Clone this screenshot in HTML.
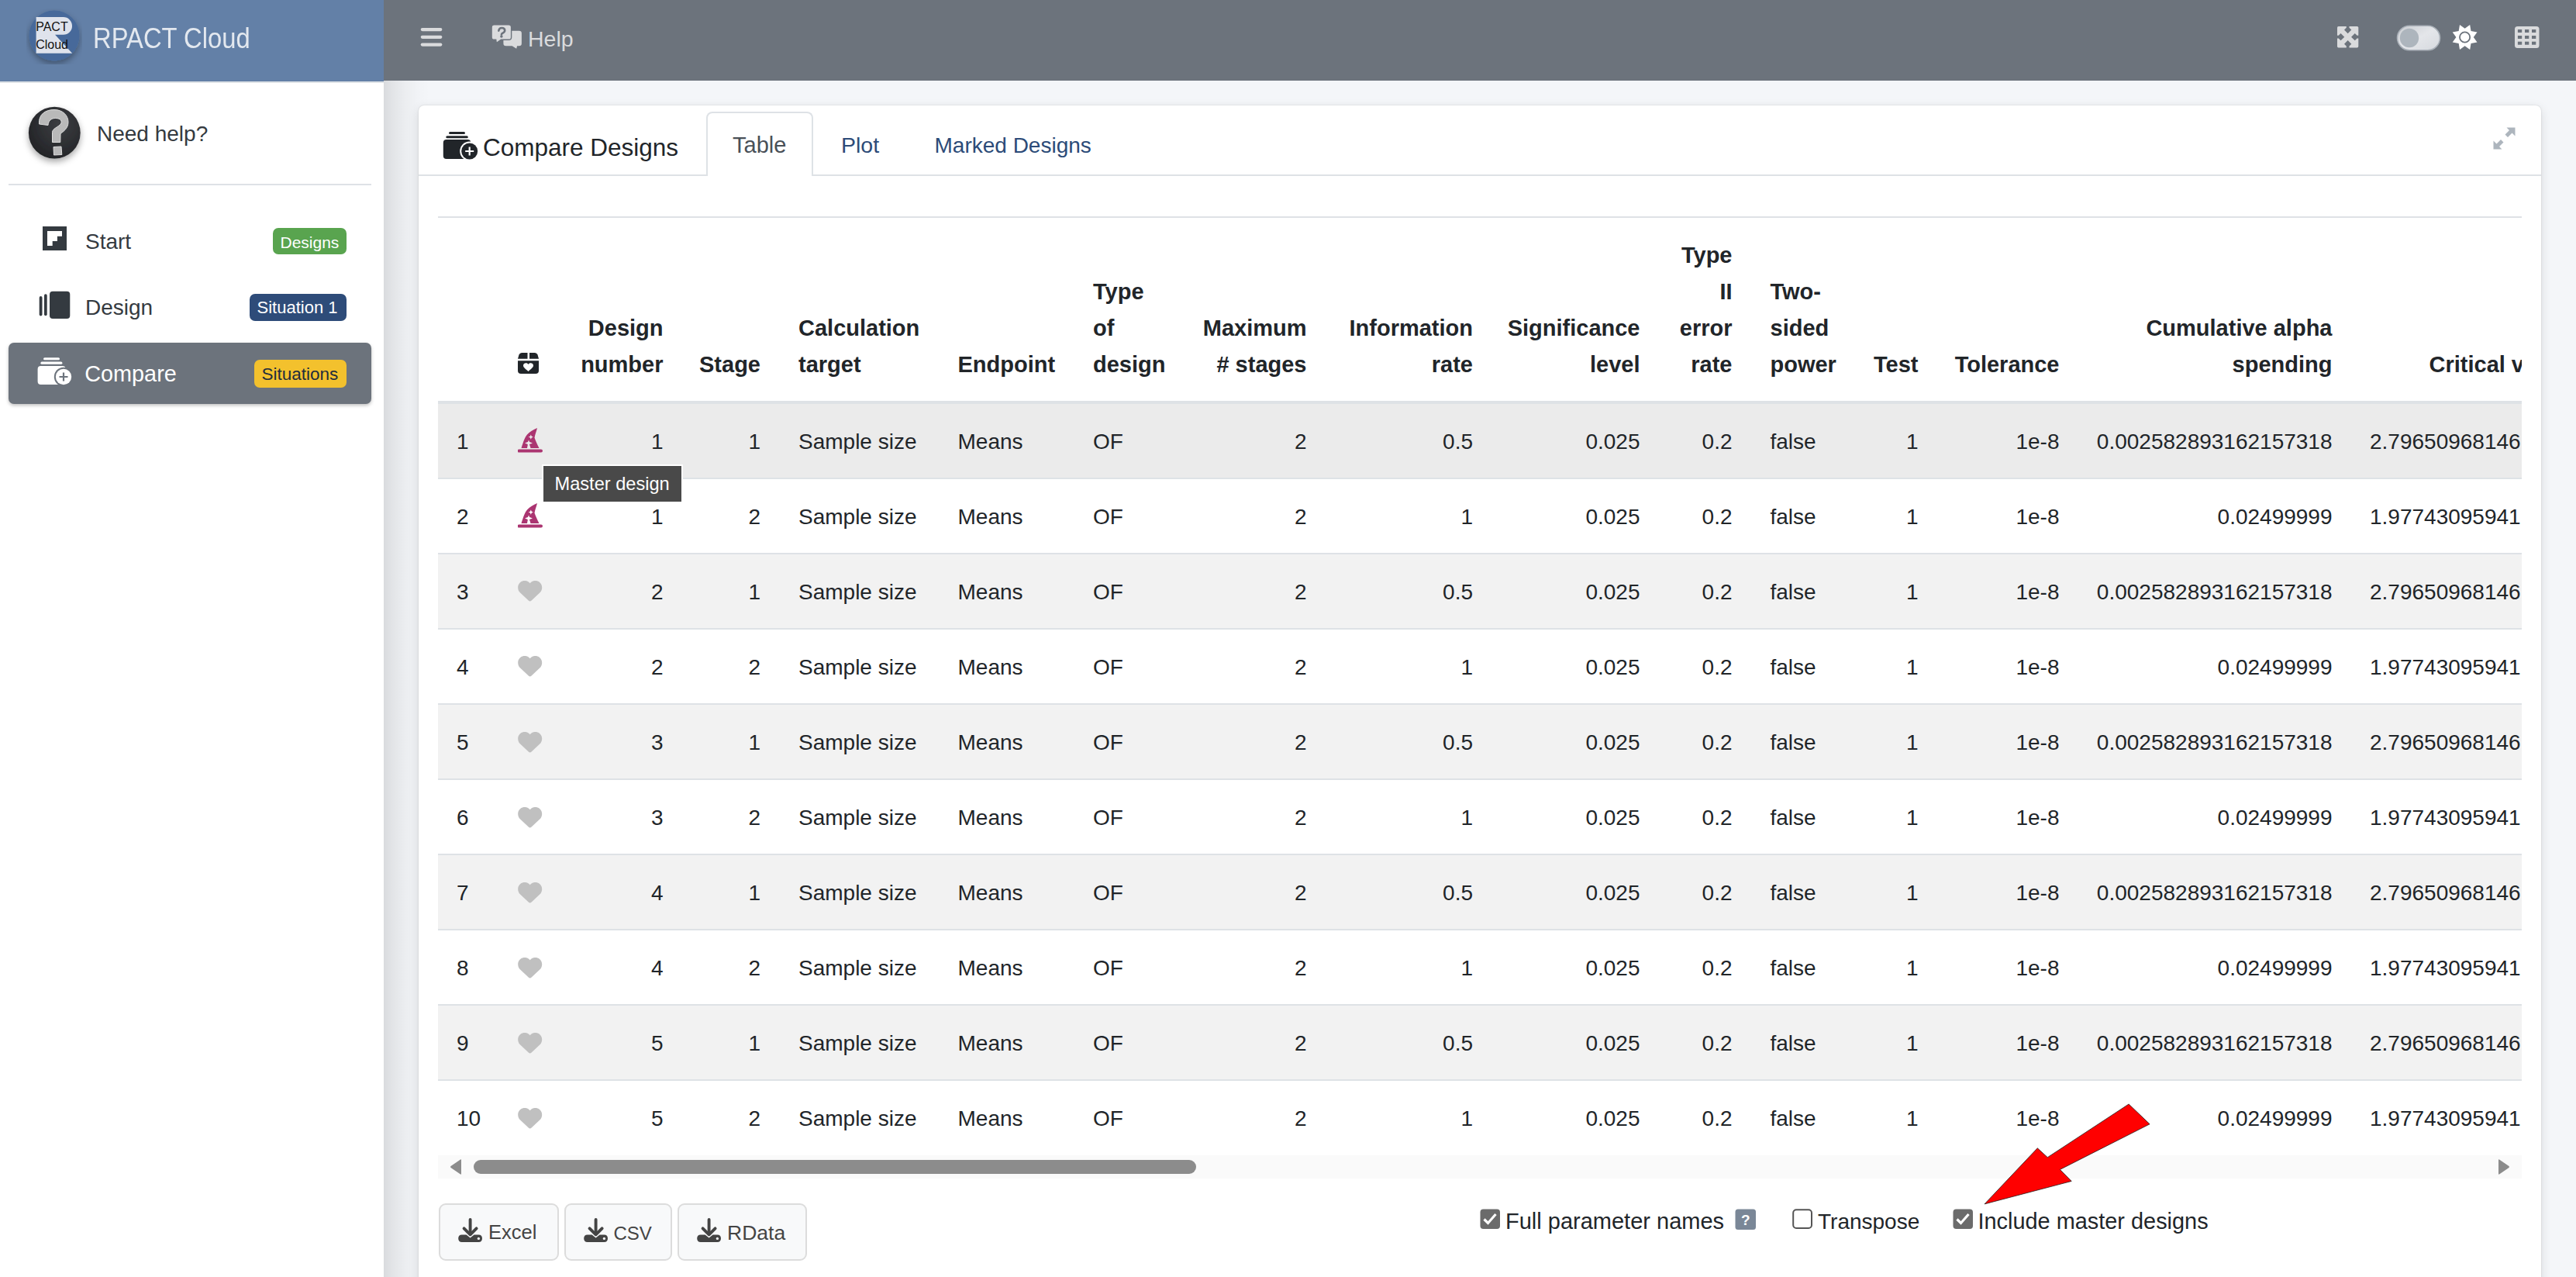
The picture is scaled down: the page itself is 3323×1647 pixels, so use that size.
<!DOCTYPE html>
<html><head><meta charset="utf-8"><title>RPACT Cloud</title>
<style>
html,body{margin:0;padding:0;}
body{width:3323px;height:1647px;overflow:hidden;position:relative;background:#f4f6f9;font-family:"Liberation Sans", sans-serif;}
.t{position:absolute;white-space:nowrap;}
.r{position:absolute;}
svg.r{display:block;}
</style></head><body>
<div class="r" style="left:495px;top:104px;width:2828px;height:1543px;background:#f4f6f9;"></div><div class="r" style="left:495px;top:0px;width:2828px;height:104px;background:#6c737c;"></div><div class="r" style="left:0px;top:0px;width:495px;height:1647px;background:#ffffff;z-index:2"></div><div class="r" style="left:0px;top:0px;width:495px;height:105px;background:#6380a7;z-index:3"></div><div class="r" style="left:0px;top:105px;width:495px;height:2px;background:#dee2e6;z-index:3"></div><div style="position:absolute;left:0;top:0;width:495px;height:1647px;z-index:4"><svg class="r" style="left:34px;top:11px;" width="72" height="72" viewBox="0 0 72 72">
<defs><filter id="ls" x="-30%" y="-30%" width="160%" height="160%"><feDropShadow dx="0" dy="4" stdDeviation="4" flood-color="#000" flood-opacity=".35"/></filter></defs>
<circle cx="36" cy="35" r="32.5" fill="#46699a" filter="url(#ls)"/>
<path d="M12.6 11.1 H47.7 A11.35 11.35 0 0 1 47.7 33.8 H37 L59.2 57.7 H12.6 Z" fill="#dfe3ec"/>
<text x="12.2" y="28.6" font-family="Liberation Sans" font-size="16" fill="#111">PACT</text>
<text x="12.2" y="51.9" font-family="Liberation Sans" font-size="16" fill="#111">Cloud</text>
</svg><div class="t" style="left:119.5px;top:30.6px;font-size:37px;line-height:37px;color:rgba(255,255,255,.82);font-weight:normal;transform:scaleX(0.885);transform-origin:left center;">RPACT Cloud</div><svg class="r" style="left:28px;top:130px;" width="86" height="86" viewBox="0 0 86 86">
<defs><filter id="hs" x="-30%" y="-30%" width="160%" height="160%"><feDropShadow dx="0" dy="4" stdDeviation="4" flood-color="#000" flood-opacity=".35"/></filter>
<radialGradient id="hg" cx="60%" cy="35%" r="70%"><stop offset="0" stop-color="#3c3e42"/><stop offset="1" stop-color="#222326"/></radialGradient></defs>
<circle cx="42.3" cy="41.2" r="33.4" fill="url(#hg)" filter="url(#hs)"/>
<path d="M22.5 30 C21.5 17 31 11.5 42 11.5 C53 11.5 60 19 60 27.5 C60 36 53 40 50 42.5 L49.8 53.5 L39.5 53.5 L39.5 40.5 C39.5 36 47.5 33.5 50.3 30 C52.5 26.5 50.5 22.5 43.5 22.5 C37.5 22.5 34.5 26 34 31.5 Z" fill="#b9b9b9" stroke="#dedede" stroke-width="1"/>
<path d="M41 59.5 L51 59 L51.8 69.5 L41.5 70 Z" fill="#b9b9b9" stroke="#dedede" stroke-width="1"/>
</svg><div class="t" style="left:125px;top:158.8px;font-size:28px;line-height:28px;color:#343a40;font-weight:normal;">Need help?</div><div class="r" style="left:11px;top:237px;width:468px;height:2px;background:#dee2e6;"></div><svg class="r" style="left:55px;top:292px;" width="31" height="31" viewBox="0 0 31 31"><rect width="31" height="31" fill="#343a40"/><path d="M6 6 H25 V12.7 H18.9 V18.9 H12.7 V25.1 H6 Z" fill="#fff"/></svg><div class="t" style="left:110px;top:297.5px;font-size:28px;line-height:28px;color:#343a40;font-weight:normal;">Start</div><div class="r" style="left:352px;top:294px;width:95px;height:34px;background:#59a44f;border-radius:7px"></div><div class="t" style="left:361.5px;top:302.1px;font-size:21px;line-height:21px;color:#ffffff;font-weight:normal;">Designs</div><svg class="r" style="left:50px;top:375px;" width="41" height="37" viewBox="0 0 41 37"><rect x="0.7" y="7" width="3.8" height="25.5" rx="1.9" fill="#343a40"/><rect x="7" y="4.3" width="3.7" height="28" rx="1.8" fill="#343a40"/><rect x="14" y="0.7" width="26.3" height="35.3" rx="4" fill="#343a40"/></svg><div class="t" style="left:110px;top:383.2px;font-size:28px;line-height:28px;color:#343a40;font-weight:normal;">Design</div><div class="r" style="left:322px;top:379px;width:125px;height:35px;background:#2e4c79;border-radius:7px"></div><div class="t" style="left:331.5px;top:386.4px;font-size:22px;line-height:22px;color:#ffffff;font-weight:normal;">Situation 1</div><div class="r" style="left:11px;top:442px;width:468px;height:79px;background:#6c737c;border-radius:7px;box-shadow:0 2px 4px rgba(0,0,0,.25)"></div><svg class="r" style="left:48px;top:460px;" width="46" height="38" viewBox="0 0 46 38"><rect x="8" y="1.3" width="21" height="3" rx="1.5" fill="#fff"/>
<rect x="4.4" y="6.6" width="28" height="3.2" rx="1.6" fill="#fff"/>
<rect x="0.6" y="12" width="36" height="24" rx="4" fill="#fff"/>
<circle cx="34" cy="26" r="12.2" fill="#6c737c"/>
<circle cx="34" cy="26" r="10.2" fill="#fff"/>
<path d="M34 20.5 V31.5 M28.5 26 H39.5" stroke="#6c737c" stroke-width="2.2"/></svg><div class="t" style="left:109.3px;top:468.1px;font-size:28.8px;line-height:28.8px;color:#ffffff;font-weight:normal;">Compare</div><div class="r" style="left:328px;top:464px;width:119px;height:36px;background:#f3c12d;border-radius:7px"></div><div class="t" style="left:337.5px;top:471.6px;font-size:22.5px;line-height:22.5px;color:#1f2d3d;font-weight:normal;">Situations</div></div><div class="r" style="left:495px;top:104px;width:60px;height:1543px;background:linear-gradient(to right, rgba(0,0,0,.11), rgba(0,0,0,.07) 12px, rgba(0,0,0,.035) 28px, rgba(0,0,0,.012) 45px, rgba(0,0,0,0));z-index:1"></div><svg class="r" style="left:542px;top:35px;" width="29" height="26" viewBox="0 0 29 26"><rect x="0.7" y="1" width="27.7" height="4.2" rx="2.1" fill="#dadbdd"/><rect x="0.7" y="10.7" width="27.7" height="4.2" rx="2.1" fill="#dadbdd"/><rect x="0.7" y="20.5" width="27.7" height="4.2" rx="2.1" fill="#dadbdd"/></svg><svg class="r" style="left:633px;top:31px;" width="42" height="34" viewBox="0 0 42 34">
<path d="M19.7 8.8 H36.6 Q39.9 8.8 39.9 12.1 V24.9 Q39.9 28.2 36.6 28.2 H34.1 L33.2 31.8 L27.6 28.2 H19.7 Q16.4 28.2 16.4 24.9 V12.1 Q16.4 8.8 19.7 8.8 Z" fill="#dadbdd"/>
<path d="M4.4 0.9 H23.3 Q26.6 0.9 26.6 4.2 V17 Q26.6 20.3 23.3 20.3 H13.4 L7.3 24.6 L6.7 20.3 H4.4 Q1.1 20.3 1.1 17 V4.2 Q1.1 0.9 4.4 0.9 Z" fill="#dadbdd" stroke="#6c737c" stroke-width="1.4"/>
<path d="M10.3 8.6 Q10.8 5 14.3 5 Q18.2 5 18.2 8.3 Q18.2 10.3 15.6 11.6 Q13.9 12.5 13.9 13.4" fill="none" stroke="#6c737c" stroke-width="2.6" stroke-linecap="round"/>
<circle cx="13.9" cy="16.1" r="1.75" fill="#6c737c"/>
</svg><div class="t" style="left:681px;top:35.7px;font-size:28.5px;line-height:28.5px;color:#dadbdd;font-weight:normal;">Help</div><svg class="r" style="left:3015px;top:34px;" width="28" height="28" viewBox="0 0 28 28"><rect x="0" y="0" width="27.3" height="27.4" rx="1.6" fill="#dadbdd"/><g transform="rotate(0 13.65 13.7)"><polygon points="11.8,-1 11.8,1.8 9,4.6 13.65,9.3 18.3,4.6 15.5,1.8 15.5,-1" fill="#6c737c"/></g><g transform="rotate(90 13.65 13.7)"><polygon points="11.8,-1 11.8,1.8 9,4.6 13.65,9.3 18.3,4.6 15.5,1.8 15.5,-1" fill="#6c737c"/></g><g transform="rotate(180 13.65 13.7)"><polygon points="11.8,-1 11.8,1.8 9,4.6 13.65,9.3 18.3,4.6 15.5,1.8 15.5,-1" fill="#6c737c"/></g><g transform="rotate(270 13.65 13.7)"><polygon points="11.8,-1 11.8,1.8 9,4.6 13.65,9.3 18.3,4.6 15.5,1.8 15.5,-1" fill="#6c737c"/></g></svg><svg class="r" style="left:3091px;top:32px;" width="58" height="34" viewBox="0 0 58 34"><defs><linearGradient id="tg" x1="0" y1="0" x2="1" y2="1"><stop offset="0" stop-color="#c9ccd1"/><stop offset=".5" stop-color="#e4e6ea"/><stop offset="1" stop-color="#d6d9de"/></linearGradient></defs>
<rect x="1.5" y="1.2" width="55" height="31.5" rx="15.8" fill="url(#tg)" stroke="#a9b0b8" stroke-width="1.6"/>
<circle cx="17" cy="17" r="12.2" fill="#adb5bd"/></svg><svg class="r" style="left:3162px;top:31px;" width="36" height="36" viewBox="0 0 36 36"><polygon points="24.18,1.11 25.52,9.08 33.49,10.42 28.80,17.00 33.49,23.58 25.52,24.92 24.18,32.89 17.60,28.20 11.02,32.89 9.68,24.92 1.71,23.58 6.40,17.00 1.71,10.42 9.68,9.08 11.02,1.11 17.60,5.80" fill="#ffffff"/><circle cx="17.6" cy="17" r="6.6" fill="#fff" stroke="#6c737c" stroke-width="1.8"/></svg><svg class="r" style="left:3243px;top:33px;" width="34" height="30" viewBox="0 0 34 30"><rect x="1" y="1" width="31.5" height="28" rx="3.5" fill="#dadbdd"/>
<g fill="#6c737c">
<rect x="4.9" y="5" width="5.3" height="4"/><rect x="14" y="5" width="5.3" height="4"/><rect x="23" y="5" width="5.3" height="4"/>
<rect x="4.9" y="13" width="5.3" height="4"/><rect x="14" y="13" width="5.3" height="4"/><rect x="23" y="13" width="5.3" height="4"/>
<rect x="4.9" y="20.7" width="5.3" height="4"/><rect x="14" y="20.7" width="5.3" height="4"/><rect x="23" y="20.7" width="5.3" height="4"/>
</g></svg><div class="r" style="left:540px;top:136px;width:2738px;height:1531px;background:#ffffff;border-radius:7px;box-shadow:0 0 2px rgba(0,0,0,.16),0 4px 14px rgba(0,0,0,.12);z-index:1"></div><div style="position:absolute;left:0;top:0;width:3323px;height:1647px;z-index:5"><div class="r" style="left:540px;top:225px;width:372px;height:2px;background:#dee2e6;"></div><div class="r" style="left:1049px;top:225px;width:2229px;height:2px;background:#dee2e6;"></div><div class="r" style="left:911px;top:144px;width:138px;height:83px;border:2px solid #dee2e6;border-bottom:none;border-radius:8px 8px 0 0;box-sizing:border-box;background:#fff"></div><svg class="r" style="left:571px;top:169px;overflow:visible" width="38" height="38" viewBox="0 0 38 38"><rect x="8" y="1" width="21" height="3" rx="1.5" fill="#212529"/>
<rect x="4.3" y="6.3" width="28.5" height="3" rx="1.5" fill="#212529"/>
<rect x="0.8" y="11" width="35.5" height="25" rx="4" fill="#212529"/>
<circle cx="34.7" cy="26" r="12.5" fill="#fff"/>
<circle cx="34.7" cy="26" r="10.5" fill="#212529"/>
<path d="M34.7 20.5 V31.5 M29.2 26 H40.2" stroke="#fff" stroke-width="2.2"/></svg><div class="t" style="left:623px;top:174.9px;font-size:31.5px;line-height:31.5px;color:#212529;font-weight:normal;">Compare Designs</div><div class="t" style="left:945px;top:172.6px;font-size:29px;line-height:29px;color:#495057;font-weight:normal;">Table</div><div class="t" style="left:1085px;top:173.0px;font-size:28.5px;line-height:28.5px;color:#2c4b78;font-weight:normal;">Plot</div><div class="t" style="left:1205.5px;top:173.5px;font-size:28px;line-height:28px;color:#2c4b78;font-weight:normal;">Marked Designs</div><svg class="r" style="left:3216px;top:164px;" width="29" height="29" viewBox="0 0 29 29"><path d="M17.5 0.5 H28.5 V11.5 L24.5 7.5 L19 13 L15.5 9.5 L21 4 Z" fill="#adb5bd"/>
<path d="M11.5 28.5 H0.5 V17.5 L4.5 21.5 L10 16 L13.5 19.5 L8 25 Z" fill="#adb5bd"/></svg><div class="r" style="left:565px;top:279px;width:2688px;height:2px;background:#dee2e6;"></div></div><div style="position:absolute;left:0;top:0;width:3253px;height:1647px;overflow:hidden;z-index:5"><div class="r" style="left:565px;top:517px;width:2688px;height:4px;background:#dee2e6;"></div><div class="r" style="left:565px;top:521px;width:2688px;height:95px;background:#ebebeb;"></div><div class="r" style="left:565px;top:616px;width:2688px;height:2px;background:#dee2e6;"></div><div class="r" style="left:565px;top:618px;width:2688px;height:95px;background:#ffffff;"></div><div class="r" style="left:565px;top:713px;width:2688px;height:2px;background:#dee2e6;"></div><div class="r" style="left:565px;top:715px;width:2688px;height:95px;background:#f2f2f2;"></div><div class="r" style="left:565px;top:810px;width:2688px;height:2px;background:#dee2e6;"></div><div class="r" style="left:565px;top:812px;width:2688px;height:95px;background:#ffffff;"></div><div class="r" style="left:565px;top:907px;width:2688px;height:2px;background:#dee2e6;"></div><div class="r" style="left:565px;top:909px;width:2688px;height:95px;background:#f2f2f2;"></div><div class="r" style="left:565px;top:1004px;width:2688px;height:2px;background:#dee2e6;"></div><div class="r" style="left:565px;top:1006px;width:2688px;height:95px;background:#ffffff;"></div><div class="r" style="left:565px;top:1101px;width:2688px;height:2px;background:#dee2e6;"></div><div class="r" style="left:565px;top:1103px;width:2688px;height:95px;background:#f2f2f2;"></div><div class="r" style="left:565px;top:1198px;width:2688px;height:2px;background:#dee2e6;"></div><div class="r" style="left:565px;top:1200px;width:2688px;height:95px;background:#ffffff;"></div><div class="r" style="left:565px;top:1295px;width:2688px;height:2px;background:#dee2e6;"></div><div class="r" style="left:565px;top:1297px;width:2688px;height:95px;background:#f2f2f2;"></div><div class="r" style="left:565px;top:1392px;width:2688px;height:2px;background:#dee2e6;"></div><div class="r" style="left:565px;top:1394px;width:2688px;height:95px;background:#ffffff;"></div><svg class="r" style="left:667px;top:454px;" width="30" height="30" viewBox="0 0 30 30"><path d="M6 1 Q3.5 1 2.5 3.5 L1 8.8 H13.5 V1 Z" fill="#212529"/>
<path d="M16 1 H23 Q25.5 1 26.5 3.5 L28 8.8 H16 Z" fill="#212529"/>
<path d="M1 11.2 H28 V24 Q28 28 24 28 H5 Q1 28 1 24 Z" fill="#212529"/>
<path d="M14.5 16 C13.5 13.5 8 13.5 8 17.5 C8 19.5 10 21 14.5 25 C19 21 21 19.5 21 17.5 C21 13.5 15.5 13.5 14.5 16 Z" fill="#fff"/></svg><div class="t" style="right:2397.5px;top:408.9px;font-size:29px;line-height:29px;color:#212529;font-weight:bold;">Design</div><div class="t" style="right:2397.5px;top:455.9px;font-size:29px;line-height:29px;color:#212529;font-weight:bold;">number</div><div class="t" style="right:2272px;top:455.9px;font-size:29px;line-height:29px;color:#212529;font-weight:bold;">Stage</div><div class="t" style="left:1030px;top:408.9px;font-size:29px;line-height:29px;color:#212529;font-weight:bold;">Calculation</div><div class="t" style="left:1030px;top:455.9px;font-size:29px;line-height:29px;color:#212529;font-weight:bold;">target</div><div class="t" style="left:1235.5px;top:455.9px;font-size:29px;line-height:29px;color:#212529;font-weight:bold;">Endpoint</div><div class="t" style="left:1410px;top:362.1px;font-size:29px;line-height:29px;color:#212529;font-weight:bold;">Type</div><div class="t" style="left:1410px;top:408.9px;font-size:29px;line-height:29px;color:#212529;font-weight:bold;">of</div><div class="t" style="left:1410px;top:455.9px;font-size:29px;line-height:29px;color:#212529;font-weight:bold;">design</div><div class="t" style="right:1567.5px;top:408.9px;font-size:29px;line-height:29px;color:#212529;font-weight:bold;">Maximum</div><div class="t" style="right:1567.5px;top:455.9px;font-size:29px;line-height:29px;color:#212529;font-weight:bold;"># stages</div><div class="t" style="right:1353px;top:408.9px;font-size:29px;line-height:29px;color:#212529;font-weight:bold;">Information</div><div class="t" style="right:1353px;top:455.9px;font-size:29px;line-height:29px;color:#212529;font-weight:bold;">rate</div><div class="t" style="right:1137.5px;top:408.9px;font-size:29px;line-height:29px;color:#212529;font-weight:bold;">Significance</div><div class="t" style="right:1137.5px;top:455.9px;font-size:29px;line-height:29px;color:#212529;font-weight:bold;">level</div><div class="t" style="right:1018.5px;top:315.3px;font-size:29px;line-height:29px;color:#212529;font-weight:bold;">Type</div><div class="t" style="right:1018.5px;top:362.1px;font-size:29px;line-height:29px;color:#212529;font-weight:bold;">II</div><div class="t" style="right:1018.5px;top:408.9px;font-size:29px;line-height:29px;color:#212529;font-weight:bold;">error</div><div class="t" style="right:1018.5px;top:455.9px;font-size:29px;line-height:29px;color:#212529;font-weight:bold;">rate</div><div class="t" style="left:2283.5px;top:362.1px;font-size:29px;line-height:29px;color:#212529;font-weight:bold;">Two-</div><div class="t" style="left:2283.5px;top:408.9px;font-size:29px;line-height:29px;color:#212529;font-weight:bold;">sided</div><div class="t" style="left:2283.5px;top:455.9px;font-size:29px;line-height:29px;color:#212529;font-weight:bold;">power</div><div class="t" style="right:778.5px;top:455.9px;font-size:29px;line-height:29px;color:#212529;font-weight:bold;">Test</div><div class="t" style="right:596.5px;top:455.9px;font-size:29px;line-height:29px;color:#212529;font-weight:bold;">Tolerance</div><div class="t" style="right:244.5px;top:408.9px;font-size:29px;line-height:29px;color:#212529;font-weight:bold;">Cumulative alpha</div><div class="t" style="right:244.5px;top:455.9px;font-size:29px;line-height:29px;color:#212529;font-weight:bold;">spending</div><div class="t" style="left:3133.5px;top:455.9px;font-size:29px;line-height:29px;color:#212529;font-weight:bold;">Critical values</div><div class="t" style="left:589px;top:555.8px;font-size:28px;line-height:28px;color:#212529;font-weight:normal;">1</div><svg class="r" style="left:667.5px;top:551.7px;" width="32" height="32" viewBox="0 0 32 32"><path d="M1.5 27.5 H30 A2 2 0 0 1 30 31.5 H1.5 A2 2 0 0 1 1.5 27.5 Z" fill="#ab3571"/>
<path d="M4.5 26 C7 18 9 12 12 8.5 C15 5 20 2 25 0 C24 4 22 9 21.5 12.5 C23 17 25 21 27.5 26 H16.5 L15.5 22.5 Q14 21 16.5 20.5 L19 19.5 L16.5 18.5 Q14.5 18 14 15.5 Q13.5 18 11.5 18.5 L9 19.5 L11.5 20.5 Q13.5 21 12.5 23 L12 26 Z" fill="#ab3571"/>
<path d="M16.8 8.5 L17.8 10.8 L20 11.6 L17.8 12.5 L16.8 14.8 L15.9 12.5 L13.6 11.6 L15.9 10.8 Z" fill="#ebebeb"/></svg><div class="t" style="right:2397.5px;top:555.8px;font-size:28px;line-height:28px;color:#212529;font-weight:normal;">1</div><div class="t" style="right:2272px;top:555.8px;font-size:28px;line-height:28px;color:#212529;font-weight:normal;">1</div><div class="t" style="left:1030px;top:555.8px;font-size:28px;line-height:28px;color:#212529;font-weight:normal;">Sample size</div><div class="t" style="left:1235.5px;top:555.8px;font-size:28px;line-height:28px;color:#212529;font-weight:normal;">Means</div><div class="t" style="left:1410px;top:555.8px;font-size:28px;line-height:28px;color:#212529;font-weight:normal;">OF</div><div class="t" style="right:1567.5px;top:555.8px;font-size:28px;line-height:28px;color:#212529;font-weight:normal;">2</div><div class="t" style="right:1353px;top:555.8px;font-size:28px;line-height:28px;color:#212529;font-weight:normal;">0.5</div><div class="t" style="right:1137.5px;top:555.8px;font-size:28px;line-height:28px;color:#212529;font-weight:normal;">0.025</div><div class="t" style="right:1018.5px;top:555.8px;font-size:28px;line-height:28px;color:#212529;font-weight:normal;">0.2</div><div class="t" style="left:2283.5px;top:555.8px;font-size:28px;line-height:28px;color:#212529;font-weight:normal;">false</div><div class="t" style="right:778.5px;top:555.8px;font-size:28px;line-height:28px;color:#212529;font-weight:normal;">1</div><div class="t" style="right:596.5px;top:555.8px;font-size:28px;line-height:28px;color:#212529;font-weight:normal;">1e-8</div><div class="t" style="right:244.5px;top:555.8px;font-size:28px;line-height:28px;color:#212529;font-weight:normal;">0.002582893162157318</div><div class="t" style="left:3057px;top:555.8px;font-size:28px;line-height:28px;color:#212529;font-weight:normal;">2.79650968146</div><div class="t" style="left:589px;top:652.8px;font-size:28px;line-height:28px;color:#212529;font-weight:normal;">2</div><svg class="r" style="left:667.5px;top:648.75px;" width="32" height="32" viewBox="0 0 32 32"><path d="M1.5 27.5 H30 A2 2 0 0 1 30 31.5 H1.5 A2 2 0 0 1 1.5 27.5 Z" fill="#ab3571"/>
<path d="M4.5 26 C7 18 9 12 12 8.5 C15 5 20 2 25 0 C24 4 22 9 21.5 12.5 C23 17 25 21 27.5 26 H16.5 L15.5 22.5 Q14 21 16.5 20.5 L19 19.5 L16.5 18.5 Q14.5 18 14 15.5 Q13.5 18 11.5 18.5 L9 19.5 L11.5 20.5 Q13.5 21 12.5 23 L12 26 Z" fill="#ab3571"/>
<path d="M16.8 8.5 L17.8 10.8 L20 11.6 L17.8 12.5 L16.8 14.8 L15.9 12.5 L13.6 11.6 L15.9 10.8 Z" fill="#ffffff"/></svg><div class="t" style="right:2397.5px;top:652.8px;font-size:28px;line-height:28px;color:#212529;font-weight:normal;">1</div><div class="t" style="right:2272px;top:652.8px;font-size:28px;line-height:28px;color:#212529;font-weight:normal;">2</div><div class="t" style="left:1030px;top:652.8px;font-size:28px;line-height:28px;color:#212529;font-weight:normal;">Sample size</div><div class="t" style="left:1235.5px;top:652.8px;font-size:28px;line-height:28px;color:#212529;font-weight:normal;">Means</div><div class="t" style="left:1410px;top:652.8px;font-size:28px;line-height:28px;color:#212529;font-weight:normal;">OF</div><div class="t" style="right:1567.5px;top:652.8px;font-size:28px;line-height:28px;color:#212529;font-weight:normal;">2</div><div class="t" style="right:1353px;top:652.8px;font-size:28px;line-height:28px;color:#212529;font-weight:normal;">1</div><div class="t" style="right:1137.5px;top:652.8px;font-size:28px;line-height:28px;color:#212529;font-weight:normal;">0.025</div><div class="t" style="right:1018.5px;top:652.8px;font-size:28px;line-height:28px;color:#212529;font-weight:normal;">0.2</div><div class="t" style="left:2283.5px;top:652.8px;font-size:28px;line-height:28px;color:#212529;font-weight:normal;">false</div><div class="t" style="right:778.5px;top:652.8px;font-size:28px;line-height:28px;color:#212529;font-weight:normal;">1</div><div class="t" style="right:596.5px;top:652.8px;font-size:28px;line-height:28px;color:#212529;font-weight:normal;">1e-8</div><div class="t" style="right:244.5px;top:652.8px;font-size:28px;line-height:28px;color:#212529;font-weight:normal;">0.02499999</div><div class="t" style="left:3057px;top:652.8px;font-size:28px;line-height:28px;color:#212529;font-weight:normal;">1.97743095941</div><div class="t" style="left:589px;top:749.9px;font-size:28px;line-height:28px;color:#212529;font-weight:normal;">3</div><svg class="r" style="left:668px;top:749px;" width="32" height="28" viewBox="0 0 32 28"><g transform="translate(0.2,-2.6) scale(0.0605)"><path d="M47.6 300.4L228.3 469.1c7.5 7 17.4 10.9 27.7 10.9s20.2-3.9 27.7-10.9L464.4 300.4c30.4-28.3 47.6-68 47.6-109.5v-5.8c0-69.900-50.5-129.5-119.4-141C347 36.5 300.6 51.4 268 84L256 96 244 84c-32.6-32.6-79-47.5-124.6-39.9C50.5 55.6 0 115.2 0 185.100v5.8c0 41.5 17.2 81.2 47.6 109.5z" fill="#c0c0c0"/></g></svg><div class="t" style="right:2397.5px;top:749.9px;font-size:28px;line-height:28px;color:#212529;font-weight:normal;">2</div><div class="t" style="right:2272px;top:749.9px;font-size:28px;line-height:28px;color:#212529;font-weight:normal;">1</div><div class="t" style="left:1030px;top:749.9px;font-size:28px;line-height:28px;color:#212529;font-weight:normal;">Sample size</div><div class="t" style="left:1235.5px;top:749.9px;font-size:28px;line-height:28px;color:#212529;font-weight:normal;">Means</div><div class="t" style="left:1410px;top:749.9px;font-size:28px;line-height:28px;color:#212529;font-weight:normal;">OF</div><div class="t" style="right:1567.5px;top:749.9px;font-size:28px;line-height:28px;color:#212529;font-weight:normal;">2</div><div class="t" style="right:1353px;top:749.9px;font-size:28px;line-height:28px;color:#212529;font-weight:normal;">0.5</div><div class="t" style="right:1137.5px;top:749.9px;font-size:28px;line-height:28px;color:#212529;font-weight:normal;">0.025</div><div class="t" style="right:1018.5px;top:749.9px;font-size:28px;line-height:28px;color:#212529;font-weight:normal;">0.2</div><div class="t" style="left:2283.5px;top:749.9px;font-size:28px;line-height:28px;color:#212529;font-weight:normal;">false</div><div class="t" style="right:778.5px;top:749.9px;font-size:28px;line-height:28px;color:#212529;font-weight:normal;">1</div><div class="t" style="right:596.5px;top:749.9px;font-size:28px;line-height:28px;color:#212529;font-weight:normal;">1e-8</div><div class="t" style="right:244.5px;top:749.9px;font-size:28px;line-height:28px;color:#212529;font-weight:normal;">0.002582893162157318</div><div class="t" style="left:3057px;top:749.9px;font-size:28px;line-height:28px;color:#212529;font-weight:normal;">2.79650968146</div><div class="t" style="left:589px;top:846.9px;font-size:28px;line-height:28px;color:#212529;font-weight:normal;">4</div><svg class="r" style="left:668px;top:846px;" width="32" height="28" viewBox="0 0 32 28"><g transform="translate(0.2,-2.6) scale(0.0605)"><path d="M47.6 300.4L228.3 469.1c7.5 7 17.4 10.9 27.7 10.9s20.2-3.9 27.7-10.9L464.4 300.4c30.4-28.3 47.6-68 47.6-109.5v-5.8c0-69.900-50.5-129.5-119.4-141C347 36.5 300.6 51.4 268 84L256 96 244 84c-32.6-32.6-79-47.5-124.6-39.9C50.5 55.6 0 115.2 0 185.100v5.8c0 41.5 17.2 81.2 47.6 109.5z" fill="#c0c0c0"/></g></svg><div class="t" style="right:2397.5px;top:846.9px;font-size:28px;line-height:28px;color:#212529;font-weight:normal;">2</div><div class="t" style="right:2272px;top:846.9px;font-size:28px;line-height:28px;color:#212529;font-weight:normal;">2</div><div class="t" style="left:1030px;top:846.9px;font-size:28px;line-height:28px;color:#212529;font-weight:normal;">Sample size</div><div class="t" style="left:1235.5px;top:846.9px;font-size:28px;line-height:28px;color:#212529;font-weight:normal;">Means</div><div class="t" style="left:1410px;top:846.9px;font-size:28px;line-height:28px;color:#212529;font-weight:normal;">OF</div><div class="t" style="right:1567.5px;top:846.9px;font-size:28px;line-height:28px;color:#212529;font-weight:normal;">2</div><div class="t" style="right:1353px;top:846.9px;font-size:28px;line-height:28px;color:#212529;font-weight:normal;">1</div><div class="t" style="right:1137.5px;top:846.9px;font-size:28px;line-height:28px;color:#212529;font-weight:normal;">0.025</div><div class="t" style="right:1018.5px;top:846.9px;font-size:28px;line-height:28px;color:#212529;font-weight:normal;">0.2</div><div class="t" style="left:2283.5px;top:846.9px;font-size:28px;line-height:28px;color:#212529;font-weight:normal;">false</div><div class="t" style="right:778.5px;top:846.9px;font-size:28px;line-height:28px;color:#212529;font-weight:normal;">1</div><div class="t" style="right:596.5px;top:846.9px;font-size:28px;line-height:28px;color:#212529;font-weight:normal;">1e-8</div><div class="t" style="right:244.5px;top:846.9px;font-size:28px;line-height:28px;color:#212529;font-weight:normal;">0.02499999</div><div class="t" style="left:3057px;top:846.9px;font-size:28px;line-height:28px;color:#212529;font-weight:normal;">1.97743095941</div><div class="t" style="left:589px;top:944.0px;font-size:28px;line-height:28px;color:#212529;font-weight:normal;">5</div><svg class="r" style="left:668px;top:944px;" width="32" height="28" viewBox="0 0 32 28"><g transform="translate(0.2,-2.6) scale(0.0605)"><path d="M47.6 300.4L228.3 469.1c7.5 7 17.4 10.9 27.7 10.9s20.2-3.9 27.7-10.9L464.4 300.4c30.4-28.3 47.6-68 47.6-109.5v-5.8c0-69.900-50.5-129.5-119.4-141C347 36.5 300.6 51.4 268 84L256 96 244 84c-32.6-32.6-79-47.5-124.6-39.9C50.5 55.6 0 115.2 0 185.100v5.8c0 41.5 17.2 81.2 47.6 109.5z" fill="#c0c0c0"/></g></svg><div class="t" style="right:2397.5px;top:944.0px;font-size:28px;line-height:28px;color:#212529;font-weight:normal;">3</div><div class="t" style="right:2272px;top:944.0px;font-size:28px;line-height:28px;color:#212529;font-weight:normal;">1</div><div class="t" style="left:1030px;top:944.0px;font-size:28px;line-height:28px;color:#212529;font-weight:normal;">Sample size</div><div class="t" style="left:1235.5px;top:944.0px;font-size:28px;line-height:28px;color:#212529;font-weight:normal;">Means</div><div class="t" style="left:1410px;top:944.0px;font-size:28px;line-height:28px;color:#212529;font-weight:normal;">OF</div><div class="t" style="right:1567.5px;top:944.0px;font-size:28px;line-height:28px;color:#212529;font-weight:normal;">2</div><div class="t" style="right:1353px;top:944.0px;font-size:28px;line-height:28px;color:#212529;font-weight:normal;">0.5</div><div class="t" style="right:1137.5px;top:944.0px;font-size:28px;line-height:28px;color:#212529;font-weight:normal;">0.025</div><div class="t" style="right:1018.5px;top:944.0px;font-size:28px;line-height:28px;color:#212529;font-weight:normal;">0.2</div><div class="t" style="left:2283.5px;top:944.0px;font-size:28px;line-height:28px;color:#212529;font-weight:normal;">false</div><div class="t" style="right:778.5px;top:944.0px;font-size:28px;line-height:28px;color:#212529;font-weight:normal;">1</div><div class="t" style="right:596.5px;top:944.0px;font-size:28px;line-height:28px;color:#212529;font-weight:normal;">1e-8</div><div class="t" style="right:244.5px;top:944.0px;font-size:28px;line-height:28px;color:#212529;font-weight:normal;">0.002582893162157318</div><div class="t" style="left:3057px;top:944.0px;font-size:28px;line-height:28px;color:#212529;font-weight:normal;">2.79650968146</div><div class="t" style="left:589px;top:1041.0px;font-size:28px;line-height:28px;color:#212529;font-weight:normal;">6</div><svg class="r" style="left:668px;top:1041px;" width="32" height="28" viewBox="0 0 32 28"><g transform="translate(0.2,-2.6) scale(0.0605)"><path d="M47.6 300.4L228.3 469.1c7.5 7 17.4 10.9 27.7 10.9s20.2-3.9 27.7-10.9L464.4 300.4c30.4-28.3 47.6-68 47.6-109.5v-5.8c0-69.900-50.5-129.5-119.4-141C347 36.5 300.6 51.4 268 84L256 96 244 84c-32.6-32.6-79-47.5-124.6-39.9C50.5 55.6 0 115.2 0 185.100v5.8c0 41.5 17.2 81.2 47.6 109.5z" fill="#c0c0c0"/></g></svg><div class="t" style="right:2397.5px;top:1041.0px;font-size:28px;line-height:28px;color:#212529;font-weight:normal;">3</div><div class="t" style="right:2272px;top:1041.0px;font-size:28px;line-height:28px;color:#212529;font-weight:normal;">2</div><div class="t" style="left:1030px;top:1041.0px;font-size:28px;line-height:28px;color:#212529;font-weight:normal;">Sample size</div><div class="t" style="left:1235.5px;top:1041.0px;font-size:28px;line-height:28px;color:#212529;font-weight:normal;">Means</div><div class="t" style="left:1410px;top:1041.0px;font-size:28px;line-height:28px;color:#212529;font-weight:normal;">OF</div><div class="t" style="right:1567.5px;top:1041.0px;font-size:28px;line-height:28px;color:#212529;font-weight:normal;">2</div><div class="t" style="right:1353px;top:1041.0px;font-size:28px;line-height:28px;color:#212529;font-weight:normal;">1</div><div class="t" style="right:1137.5px;top:1041.0px;font-size:28px;line-height:28px;color:#212529;font-weight:normal;">0.025</div><div class="t" style="right:1018.5px;top:1041.0px;font-size:28px;line-height:28px;color:#212529;font-weight:normal;">0.2</div><div class="t" style="left:2283.5px;top:1041.0px;font-size:28px;line-height:28px;color:#212529;font-weight:normal;">false</div><div class="t" style="right:778.5px;top:1041.0px;font-size:28px;line-height:28px;color:#212529;font-weight:normal;">1</div><div class="t" style="right:596.5px;top:1041.0px;font-size:28px;line-height:28px;color:#212529;font-weight:normal;">1e-8</div><div class="t" style="right:244.5px;top:1041.0px;font-size:28px;line-height:28px;color:#212529;font-weight:normal;">0.02499999</div><div class="t" style="left:3057px;top:1041.0px;font-size:28px;line-height:28px;color:#212529;font-weight:normal;">1.97743095941</div><div class="t" style="left:589px;top:1138.1px;font-size:28px;line-height:28px;color:#212529;font-weight:normal;">7</div><svg class="r" style="left:668px;top:1138px;" width="32" height="28" viewBox="0 0 32 28"><g transform="translate(0.2,-2.6) scale(0.0605)"><path d="M47.6 300.4L228.3 469.1c7.5 7 17.4 10.9 27.7 10.9s20.2-3.9 27.7-10.9L464.4 300.4c30.4-28.3 47.6-68 47.6-109.5v-5.8c0-69.900-50.5-129.5-119.4-141C347 36.5 300.6 51.4 268 84L256 96 244 84c-32.6-32.6-79-47.5-124.6-39.9C50.5 55.6 0 115.2 0 185.100v5.8c0 41.5 17.2 81.2 47.6 109.5z" fill="#c0c0c0"/></g></svg><div class="t" style="right:2397.5px;top:1138.1px;font-size:28px;line-height:28px;color:#212529;font-weight:normal;">4</div><div class="t" style="right:2272px;top:1138.1px;font-size:28px;line-height:28px;color:#212529;font-weight:normal;">1</div><div class="t" style="left:1030px;top:1138.1px;font-size:28px;line-height:28px;color:#212529;font-weight:normal;">Sample size</div><div class="t" style="left:1235.5px;top:1138.1px;font-size:28px;line-height:28px;color:#212529;font-weight:normal;">Means</div><div class="t" style="left:1410px;top:1138.1px;font-size:28px;line-height:28px;color:#212529;font-weight:normal;">OF</div><div class="t" style="right:1567.5px;top:1138.1px;font-size:28px;line-height:28px;color:#212529;font-weight:normal;">2</div><div class="t" style="right:1353px;top:1138.1px;font-size:28px;line-height:28px;color:#212529;font-weight:normal;">0.5</div><div class="t" style="right:1137.5px;top:1138.1px;font-size:28px;line-height:28px;color:#212529;font-weight:normal;">0.025</div><div class="t" style="right:1018.5px;top:1138.1px;font-size:28px;line-height:28px;color:#212529;font-weight:normal;">0.2</div><div class="t" style="left:2283.5px;top:1138.1px;font-size:28px;line-height:28px;color:#212529;font-weight:normal;">false</div><div class="t" style="right:778.5px;top:1138.1px;font-size:28px;line-height:28px;color:#212529;font-weight:normal;">1</div><div class="t" style="right:596.5px;top:1138.1px;font-size:28px;line-height:28px;color:#212529;font-weight:normal;">1e-8</div><div class="t" style="right:244.5px;top:1138.1px;font-size:28px;line-height:28px;color:#212529;font-weight:normal;">0.002582893162157318</div><div class="t" style="left:3057px;top:1138.1px;font-size:28px;line-height:28px;color:#212529;font-weight:normal;">2.79650968146</div><div class="t" style="left:589px;top:1235.1px;font-size:28px;line-height:28px;color:#212529;font-weight:normal;">8</div><svg class="r" style="left:668px;top:1235px;" width="32" height="28" viewBox="0 0 32 28"><g transform="translate(0.2,-2.6) scale(0.0605)"><path d="M47.6 300.4L228.3 469.1c7.5 7 17.4 10.9 27.7 10.9s20.2-3.9 27.7-10.9L464.4 300.4c30.4-28.3 47.6-68 47.6-109.5v-5.8c0-69.900-50.5-129.5-119.4-141C347 36.5 300.6 51.4 268 84L256 96 244 84c-32.6-32.6-79-47.5-124.6-39.9C50.5 55.6 0 115.2 0 185.100v5.8c0 41.5 17.2 81.2 47.6 109.5z" fill="#c0c0c0"/></g></svg><div class="t" style="right:2397.5px;top:1235.1px;font-size:28px;line-height:28px;color:#212529;font-weight:normal;">4</div><div class="t" style="right:2272px;top:1235.1px;font-size:28px;line-height:28px;color:#212529;font-weight:normal;">2</div><div class="t" style="left:1030px;top:1235.1px;font-size:28px;line-height:28px;color:#212529;font-weight:normal;">Sample size</div><div class="t" style="left:1235.5px;top:1235.1px;font-size:28px;line-height:28px;color:#212529;font-weight:normal;">Means</div><div class="t" style="left:1410px;top:1235.1px;font-size:28px;line-height:28px;color:#212529;font-weight:normal;">OF</div><div class="t" style="right:1567.5px;top:1235.1px;font-size:28px;line-height:28px;color:#212529;font-weight:normal;">2</div><div class="t" style="right:1353px;top:1235.1px;font-size:28px;line-height:28px;color:#212529;font-weight:normal;">1</div><div class="t" style="right:1137.5px;top:1235.1px;font-size:28px;line-height:28px;color:#212529;font-weight:normal;">0.025</div><div class="t" style="right:1018.5px;top:1235.1px;font-size:28px;line-height:28px;color:#212529;font-weight:normal;">0.2</div><div class="t" style="left:2283.5px;top:1235.1px;font-size:28px;line-height:28px;color:#212529;font-weight:normal;">false</div><div class="t" style="right:778.5px;top:1235.1px;font-size:28px;line-height:28px;color:#212529;font-weight:normal;">1</div><div class="t" style="right:596.5px;top:1235.1px;font-size:28px;line-height:28px;color:#212529;font-weight:normal;">1e-8</div><div class="t" style="right:244.5px;top:1235.1px;font-size:28px;line-height:28px;color:#212529;font-weight:normal;">0.02499999</div><div class="t" style="left:3057px;top:1235.1px;font-size:28px;line-height:28px;color:#212529;font-weight:normal;">1.97743095941</div><div class="t" style="left:589px;top:1332.2px;font-size:28px;line-height:28px;color:#212529;font-weight:normal;">9</div><svg class="r" style="left:668px;top:1332px;" width="32" height="28" viewBox="0 0 32 28"><g transform="translate(0.2,-2.6) scale(0.0605)"><path d="M47.6 300.4L228.3 469.1c7.5 7 17.4 10.9 27.7 10.9s20.2-3.9 27.7-10.9L464.4 300.4c30.4-28.3 47.6-68 47.6-109.5v-5.8c0-69.900-50.5-129.5-119.4-141C347 36.5 300.6 51.4 268 84L256 96 244 84c-32.6-32.6-79-47.5-124.6-39.9C50.5 55.6 0 115.2 0 185.100v5.8c0 41.5 17.2 81.2 47.6 109.5z" fill="#c0c0c0"/></g></svg><div class="t" style="right:2397.5px;top:1332.2px;font-size:28px;line-height:28px;color:#212529;font-weight:normal;">5</div><div class="t" style="right:2272px;top:1332.2px;font-size:28px;line-height:28px;color:#212529;font-weight:normal;">1</div><div class="t" style="left:1030px;top:1332.2px;font-size:28px;line-height:28px;color:#212529;font-weight:normal;">Sample size</div><div class="t" style="left:1235.5px;top:1332.2px;font-size:28px;line-height:28px;color:#212529;font-weight:normal;">Means</div><div class="t" style="left:1410px;top:1332.2px;font-size:28px;line-height:28px;color:#212529;font-weight:normal;">OF</div><div class="t" style="right:1567.5px;top:1332.2px;font-size:28px;line-height:28px;color:#212529;font-weight:normal;">2</div><div class="t" style="right:1353px;top:1332.2px;font-size:28px;line-height:28px;color:#212529;font-weight:normal;">0.5</div><div class="t" style="right:1137.5px;top:1332.2px;font-size:28px;line-height:28px;color:#212529;font-weight:normal;">0.025</div><div class="t" style="right:1018.5px;top:1332.2px;font-size:28px;line-height:28px;color:#212529;font-weight:normal;">0.2</div><div class="t" style="left:2283.5px;top:1332.2px;font-size:28px;line-height:28px;color:#212529;font-weight:normal;">false</div><div class="t" style="right:778.5px;top:1332.2px;font-size:28px;line-height:28px;color:#212529;font-weight:normal;">1</div><div class="t" style="right:596.5px;top:1332.2px;font-size:28px;line-height:28px;color:#212529;font-weight:normal;">1e-8</div><div class="t" style="right:244.5px;top:1332.2px;font-size:28px;line-height:28px;color:#212529;font-weight:normal;">0.002582893162157318</div><div class="t" style="left:3057px;top:1332.2px;font-size:28px;line-height:28px;color:#212529;font-weight:normal;">2.79650968146</div><div class="t" style="left:589px;top:1429.2px;font-size:28px;line-height:28px;color:#212529;font-weight:normal;">10</div><svg class="r" style="left:668px;top:1429px;" width="32" height="28" viewBox="0 0 32 28"><g transform="translate(0.2,-2.6) scale(0.0605)"><path d="M47.6 300.4L228.3 469.1c7.5 7 17.4 10.9 27.7 10.9s20.2-3.9 27.7-10.9L464.4 300.4c30.4-28.3 47.6-68 47.6-109.5v-5.8c0-69.900-50.5-129.5-119.4-141C347 36.5 300.6 51.4 268 84L256 96 244 84c-32.6-32.6-79-47.5-124.6-39.9C50.5 55.6 0 115.2 0 185.100v5.8c0 41.5 17.2 81.2 47.6 109.5z" fill="#c0c0c0"/></g></svg><div class="t" style="right:2397.5px;top:1429.2px;font-size:28px;line-height:28px;color:#212529;font-weight:normal;">5</div><div class="t" style="right:2272px;top:1429.2px;font-size:28px;line-height:28px;color:#212529;font-weight:normal;">2</div><div class="t" style="left:1030px;top:1429.2px;font-size:28px;line-height:28px;color:#212529;font-weight:normal;">Sample size</div><div class="t" style="left:1235.5px;top:1429.2px;font-size:28px;line-height:28px;color:#212529;font-weight:normal;">Means</div><div class="t" style="left:1410px;top:1429.2px;font-size:28px;line-height:28px;color:#212529;font-weight:normal;">OF</div><div class="t" style="right:1567.5px;top:1429.2px;font-size:28px;line-height:28px;color:#212529;font-weight:normal;">2</div><div class="t" style="right:1353px;top:1429.2px;font-size:28px;line-height:28px;color:#212529;font-weight:normal;">1</div><div class="t" style="right:1137.5px;top:1429.2px;font-size:28px;line-height:28px;color:#212529;font-weight:normal;">0.025</div><div class="t" style="right:1018.5px;top:1429.2px;font-size:28px;line-height:28px;color:#212529;font-weight:normal;">0.2</div><div class="t" style="left:2283.5px;top:1429.2px;font-size:28px;line-height:28px;color:#212529;font-weight:normal;">false</div><div class="t" style="right:778.5px;top:1429.2px;font-size:28px;line-height:28px;color:#212529;font-weight:normal;">1</div><div class="t" style="right:596.5px;top:1429.2px;font-size:28px;line-height:28px;color:#212529;font-weight:normal;">1e-8</div><div class="t" style="right:244.5px;top:1429.2px;font-size:28px;line-height:28px;color:#212529;font-weight:normal;">0.02499999</div><div class="t" style="left:3057px;top:1429.2px;font-size:28px;line-height:28px;color:#212529;font-weight:normal;">1.97743095941</div><div class="r" style="left:565px;top:1490px;width:2688px;height:30px;background:#fafafa;"></div><div class="r" style="left:611px;top:1496px;width:932px;height:18px;background:#8c8c8c;border-radius:9px"></div><svg class="r" style="left:580px;top:1495px;" width="16" height="20" viewBox="0 0 16 20"><path d="M15 1 V19 Q15 20 14 19.5 L1.5 11 Q0.5 10 1.5 9 L14 0.5 Q15 0 15 1 Z" fill="#8c8c8c"/></svg><svg class="r" style="left:3222px;top:1495px;" width="16" height="20" viewBox="0 0 16 20"><path d="M1 1 V19 Q1 20 2 19.5 L14.5 11 Q15.5 10 14.5 9 L2 0.5 Q1 0 1 1 Z" fill="#8c8c8c"/></svg></div><div style="position:absolute;left:0;top:0;width:3323px;height:1647px;z-index:8"><div class="r" style="left:699px;top:599px;width:182px;height:49px;background:#ffffff;"></div><div class="r" style="left:701px;top:601px;width:178px;height:46px;background:#494949;"></div><div class="t" style="left:715.5px;top:613.4px;font-size:23.6px;line-height:23.6px;color:#ffffff;font-weight:normal;">Master design</div><div class="r" style="left:565.5px;top:1551.5px;width:155px;height:74px;border:2px solid #dcdcdc;border-radius:9px;background:#f8f9fa;box-sizing:border-box"></div><svg class="r" style="left:585px;top:1565px;" width="45" height="43" viewBox="0 0 45 43"><path d="M21.6 7.9 V24" stroke="#444" stroke-width="3.9" stroke-linecap="round"/><path d="M13.6 19.3 L21.6 27.3 L29.6 19.3" fill="none" stroke="#444" stroke-width="3.9" stroke-linecap="round" stroke-linejoin="round"/><path d="M10.8 27.6 H16.6 L21.6 31.6 L26.6 27.6 H32.4 Q37 27.6 37 32.3 Q37 37 32.4 37 H10.8 Q6.2 37 6.2 32.3 Q6.2 27.6 10.8 27.6 Z" fill="#444"/><circle cx="32.4" cy="32.4" r="1.65" fill="#f8f9fa"/></svg><div class="t" style="left:630px;top:1577.3px;font-size:25.5px;line-height:25.5px;color:#444444;font-weight:normal;">Excel</div><div class="r" style="left:727.5px;top:1551.5px;width:139px;height:74px;border:2px solid #dcdcdc;border-radius:9px;background:#f8f9fa;box-sizing:border-box"></div><svg class="r" style="left:747px;top:1565px;" width="45" height="43" viewBox="0 0 45 43"><path d="M21.6 7.9 V24" stroke="#444" stroke-width="3.9" stroke-linecap="round"/><path d="M13.6 19.3 L21.6 27.3 L29.6 19.3" fill="none" stroke="#444" stroke-width="3.9" stroke-linecap="round" stroke-linejoin="round"/><path d="M10.8 27.6 H16.6 L21.6 31.6 L26.6 27.6 H32.4 Q37 27.6 37 32.3 Q37 37 32.4 37 H10.8 Q6.2 37 6.2 32.3 Q6.2 27.6 10.8 27.6 Z" fill="#444"/><circle cx="32.4" cy="32.4" r="1.65" fill="#f8f9fa"/></svg><div class="t" style="left:791.5px;top:1578.6px;font-size:24px;line-height:24px;color:#444444;font-weight:normal;">CSV</div><div class="r" style="left:873.5px;top:1551.5px;width:167px;height:74px;border:2px solid #dcdcdc;border-radius:9px;background:#f8f9fa;box-sizing:border-box"></div><svg class="r" style="left:893px;top:1565px;" width="45" height="43" viewBox="0 0 45 43"><path d="M21.6 7.9 V24" stroke="#444" stroke-width="3.9" stroke-linecap="round"/><path d="M13.6 19.3 L21.6 27.3 L29.6 19.3" fill="none" stroke="#444" stroke-width="3.9" stroke-linecap="round" stroke-linejoin="round"/><path d="M10.8 27.6 H16.6 L21.6 31.6 L26.6 27.6 H32.4 Q37 27.6 37 32.3 Q37 37 32.4 37 H10.8 Q6.2 37 6.2 32.3 Q6.2 27.6 10.8 27.6 Z" fill="#444"/><circle cx="32.4" cy="32.4" r="1.65" fill="#f8f9fa"/></svg><div class="t" style="left:938px;top:1576.5px;font-size:26.5px;line-height:26.5px;color:#444444;font-weight:normal;">RData</div><svg class="r" style="left:1908.5px;top:1559px;" width="27" height="27" viewBox="0 0 27 27"><rect x="0.5" y="0.5" width="25.5" height="25.5" rx="4" fill="#6b6b6b"/><path d="M5.5 13.5 L10.5 18.5 L20.5 7" stroke="#fff" stroke-width="3.2" fill="none"/></svg><div class="t" style="left:1942px;top:1560.9px;font-size:29px;line-height:29px;color:#212529;font-weight:normal;">Full parameter names</div><svg class="r" style="left:2238px;top:1559px;" width="28" height="28" viewBox="0 0 28 28"><rect x="0.5" y="0.5" width="26.5" height="26.5" rx="3.5" fill="#7a8797"/><text x="13.75" y="21" text-anchor="middle" font-family="Liberation Sans" font-weight="bold" font-size="19" fill="#fff">?</text></svg><svg class="r" style="left:2312px;top:1559px;" width="27" height="27" viewBox="0 0 27 27"><rect x="1.2" y="1.2" width="23.8" height="23.8" rx="4" fill="#fff" stroke="#555" stroke-width="2"/></svg><div class="t" style="left:2345px;top:1561.8px;font-size:28px;line-height:28px;color:#212529;font-weight:normal;">Transpose</div><svg class="r" style="left:2518.5px;top:1559px;" width="27" height="27" viewBox="0 0 27 27"><rect x="0.5" y="0.5" width="25.5" height="25.5" rx="4" fill="#6b6b6b"/><path d="M5.5 13.5 L10.5 18.5 L20.5 7" stroke="#fff" stroke-width="3.2" fill="none"/></svg><div class="t" style="left:2551.5px;top:1561.0px;font-size:28.9px;line-height:28.9px;color:#212529;font-weight:normal;">Include master designs</div><svg class="r" style="left:2540px;top:1410px;" width="250" height="160" viewBox="0 0 250 160"><polygon points="20,142.9 88.3,70.8 101.3,82.7 206.1,14 233.1,39.8 117.4,98.4 132.2,113.4" fill="#ff0000" stroke="#222" stroke-width="0.8" stroke-linejoin="miter"/></svg></div>
</body></html>
